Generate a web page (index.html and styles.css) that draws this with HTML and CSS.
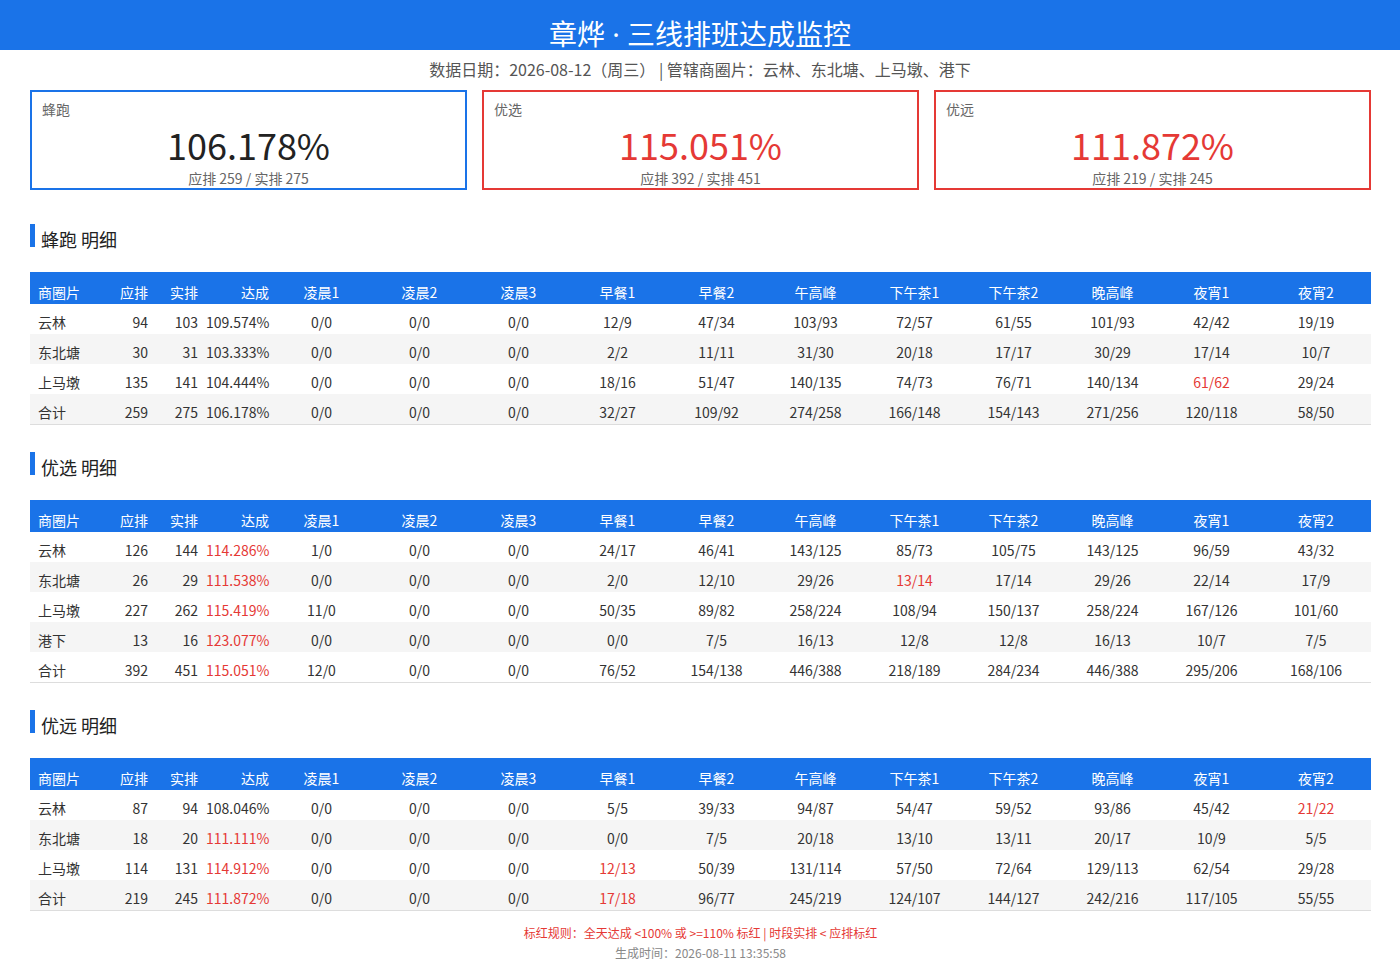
FILE: index.html
```html
<!DOCTYPE html>
<html lang="zh-CN">
<head>
<meta charset="utf-8">
<title>章烨 · 三线排班达成监控</title>
<link rel="stylesheet" href="styles.css">
</head>
<body>
<header class="topbar"><h1 class="title">章烨<span class="dot"> · </span>三线排班达成监控</h1></header>
<div class="subtitle">数据日期：2026-08-12（周三） | 管辖商圈片：云林、东北塘、上马墩、港下</div>
<main class="wrap">
  <section class="cards">
    <div class="card card-ok">
      <div class="card-label">蜂跑</div>
      <div class="card-value">106.178%</div>
      <div class="card-sub">应排 259 / 实排 275</div>
    </div>
    <div class="card card-bad">
      <div class="card-label">优选</div>
      <div class="card-value red">115.051%</div>
      <div class="card-sub">应排 392 / 实排 451</div>
    </div>
    <div class="card card-bad">
      <div class="card-label">优远</div>
      <div class="card-value red">111.872%</div>
      <div class="card-sub">应排 219 / 实排 245</div>
    </div>
  </section>

  <h2 class="sec-title"><span class="bar"></span><span class="sec-text">蜂跑 明细</span></h2>
  <table class="grid">
    <colgroup><col class="c1"><col class="c2"><col class="c3"><col class="c4"><col class="c5"><col class="cn"><col class="cn"><col class="cn"><col class="cn"><col class="cn"><col class="cn"><col class="cn"><col class="cn"><col class="cn"><col class="cl"></colgroup>
    <thead><tr><th class="l">商圈片</th><th class="r">应排</th><th class="r">实排</th><th class="r">达成</th><th>凌晨1</th><th>凌晨2</th><th>凌晨3</th><th>早餐1</th><th>早餐2</th><th>午高峰</th><th>下午茶1</th><th>下午茶2</th><th>晚高峰</th><th>夜宵1</th><th>夜宵2</th></tr></thead>
    <tbody>
      <tr><td class="l">云林</td><td class="r">94</td><td class="r">103</td><td class="r">109.574%</td><td>0/0</td><td>0/0</td><td>0/0</td><td>12/9</td><td>47/34</td><td>103/93</td><td>72/57</td><td>61/55</td><td>101/93</td><td>42/42</td><td>19/19</td></tr>
      <tr><td class="l">东北塘</td><td class="r">30</td><td class="r">31</td><td class="r">103.333%</td><td>0/0</td><td>0/0</td><td>0/0</td><td>2/2</td><td>11/11</td><td>31/30</td><td>20/18</td><td>17/17</td><td>30/29</td><td>17/14</td><td>10/7</td></tr>
      <tr><td class="l">上马墩</td><td class="r">135</td><td class="r">141</td><td class="r">104.444%</td><td>0/0</td><td>0/0</td><td>0/0</td><td>18/16</td><td>51/47</td><td>140/135</td><td>74/73</td><td>76/71</td><td>140/134</td><td class="red">61/62</td><td>29/24</td></tr>
      <tr><td class="l">合计</td><td class="r">259</td><td class="r">275</td><td class="r">106.178%</td><td>0/0</td><td>0/0</td><td>0/0</td><td>32/27</td><td>109/92</td><td>274/258</td><td>166/148</td><td>154/143</td><td>271/256</td><td>120/118</td><td>58/50</td></tr>
    </tbody>
  </table>

  <h2 class="sec-title"><span class="bar"></span><span class="sec-text">优选 明细</span></h2>
  <table class="grid">
    <colgroup><col class="c1"><col class="c2"><col class="c3"><col class="c4"><col class="c5"><col class="cn"><col class="cn"><col class="cn"><col class="cn"><col class="cn"><col class="cn"><col class="cn"><col class="cn"><col class="cn"><col class="cl"></colgroup>
    <thead><tr><th class="l">商圈片</th><th class="r">应排</th><th class="r">实排</th><th class="r">达成</th><th>凌晨1</th><th>凌晨2</th><th>凌晨3</th><th>早餐1</th><th>早餐2</th><th>午高峰</th><th>下午茶1</th><th>下午茶2</th><th>晚高峰</th><th>夜宵1</th><th>夜宵2</th></tr></thead>
    <tbody>
      <tr><td class="l">云林</td><td class="r">126</td><td class="r">144</td><td class="r red">114.286%</td><td>1/0</td><td>0/0</td><td>0/0</td><td>24/17</td><td>46/41</td><td>143/125</td><td>85/73</td><td>105/75</td><td>143/125</td><td>96/59</td><td>43/32</td></tr>
      <tr><td class="l">东北塘</td><td class="r">26</td><td class="r">29</td><td class="r red">111.538%</td><td>0/0</td><td>0/0</td><td>0/0</td><td>2/0</td><td>12/10</td><td>29/26</td><td class="red">13/14</td><td>17/14</td><td>29/26</td><td>22/14</td><td>17/9</td></tr>
      <tr><td class="l">上马墩</td><td class="r">227</td><td class="r">262</td><td class="r red">115.419%</td><td>11/0</td><td>0/0</td><td>0/0</td><td>50/35</td><td>89/82</td><td>258/224</td><td>108/94</td><td>150/137</td><td>258/224</td><td>167/126</td><td>101/60</td></tr>
      <tr><td class="l">港下</td><td class="r">13</td><td class="r">16</td><td class="r red">123.077%</td><td>0/0</td><td>0/0</td><td>0/0</td><td>0/0</td><td>7/5</td><td>16/13</td><td>12/8</td><td>12/8</td><td>16/13</td><td>10/7</td><td>7/5</td></tr>
      <tr><td class="l">合计</td><td class="r">392</td><td class="r">451</td><td class="r red">115.051%</td><td>12/0</td><td>0/0</td><td>0/0</td><td>76/52</td><td>154/138</td><td>446/388</td><td>218/189</td><td>284/234</td><td>446/388</td><td>295/206</td><td>168/106</td></tr>
    </tbody>
  </table>

  <h2 class="sec-title"><span class="bar"></span><span class="sec-text">优远 明细</span></h2>
  <table class="grid">
    <colgroup><col class="c1"><col class="c2"><col class="c3"><col class="c4"><col class="c5"><col class="cn"><col class="cn"><col class="cn"><col class="cn"><col class="cn"><col class="cn"><col class="cn"><col class="cn"><col class="cn"><col class="cl"></colgroup>
    <thead><tr><th class="l">商圈片</th><th class="r">应排</th><th class="r">实排</th><th class="r">达成</th><th>凌晨1</th><th>凌晨2</th><th>凌晨3</th><th>早餐1</th><th>早餐2</th><th>午高峰</th><th>下午茶1</th><th>下午茶2</th><th>晚高峰</th><th>夜宵1</th><th>夜宵2</th></tr></thead>
    <tbody>
      <tr><td class="l">云林</td><td class="r">87</td><td class="r">94</td><td class="r">108.046%</td><td>0/0</td><td>0/0</td><td>0/0</td><td>5/5</td><td>39/33</td><td>94/87</td><td>54/47</td><td>59/52</td><td>93/86</td><td>45/42</td><td class="red">21/22</td></tr>
      <tr><td class="l">东北塘</td><td class="r">18</td><td class="r">20</td><td class="r red">111.111%</td><td>0/0</td><td>0/0</td><td>0/0</td><td>0/0</td><td>7/5</td><td>20/18</td><td>13/10</td><td>13/11</td><td>20/17</td><td>10/9</td><td>5/5</td></tr>
      <tr><td class="l">上马墩</td><td class="r">114</td><td class="r">131</td><td class="r red">114.912%</td><td>0/0</td><td>0/0</td><td>0/0</td><td class="red">12/13</td><td>50/39</td><td>131/114</td><td>57/50</td><td>72/64</td><td>129/113</td><td>62/54</td><td>29/28</td></tr>
      <tr><td class="l">合计</td><td class="r">219</td><td class="r">245</td><td class="r red">111.872%</td><td>0/0</td><td>0/0</td><td>0/0</td><td class="red">17/18</td><td>96/77</td><td>245/219</td><td>124/107</td><td>144/127</td><td>242/216</td><td>117/105</td><td>55/55</td></tr>
    </tbody>
  </table>

  <footer class="foot">
    <div class="rule">标红规则：全天达成 &lt;100% 或 &gt;=110% 标红 | 时段实排 &lt; 应排标红</div>
    <div class="gen">生成时间：2026-08-11 13:35:58</div>
  </footer>
</main>
</body>
</html>
```

FILE: styles.css
```css
* { box-sizing: border-box; }
html, body { margin: 0; padding: 0; background: #fff; }
body {
  font-family: "Noto Sans CJK SC", "Noto Sans", sans-serif;
  color: #333;
}
.topbar {
  height: 50px;
  background: #1a73e8;
}
.title {
  margin: 0;
  padding-top: 16px;
  font-size: 28px;
  line-height: 34px;
  font-weight: 400;
  color: #fff;
  text-align: center;
}
.dot {
  font-family: "Noto Sans", "DejaVu Sans", sans-serif;
}
.subtitle {
  margin-top: 8px;
  font-size: 16px;
  line-height: 22px;
  color: #555;
  text-align: center;
}
.wrap {
  padding: 0 29px 0 30px;
}
.cards {
  margin-top: 10px;
  display: grid;
  grid-template-columns: repeat(3, 1fr);
  gap: 15px;
}
.card {
  height: 100px;
  border: 2px solid #1a73e8;
  padding: 7px 10px 0;
  text-align: center;
}
.card-bad { border-color: #e53935; }
.card-label {
  text-align: left;
  font-size: 14px;
  line-height: 20px;
  color: #666;
}
.card-value {
  margin-top: 7px;
  font-size: 36px;
  line-height: 36px;
  color: #222;
}
.card-sub {
  margin-top: 7px;
  font-size: 14px;
  line-height: 18px;
  color: #666;
}
.red { color: #e53935; }
.card-value.red { color: #e53935; }

.sec-title {
  margin: 27px 0 22px;
  display: flex;
  align-items: flex-start;
  gap: 6px;
  font-size: 18px;
  font-weight: 400;
  color: #222;
}
.cards + .sec-title { margin-top: 34px; }
.bar {
  width: 5px;
  height: 23px;
  background: #1a73e8;
}
.sec-text {
  margin-top: 4px;
  line-height: 22px;
}

.grid {
  width: 100%;
  border-collapse: collapse;
  table-layout: fixed;
  font-size: 14px;
  border-bottom: 1px solid #ddd;
}
col.c1 { width: 80px; }
col.c2 { width: 42px; }
col.c3 { width: 50px; }
col.c4 { width: 71px; }
col.c5 { width: 97px; }
col.cn { width: 99px; }
col.cl { width: 110px; }
.grid th {
  background: #1a73e8;
  color: #fff;
  font-weight: 400;
  padding: 11px 4px 3px;
  line-height: 18px;
  text-align: center;
  white-space: nowrap;
}
.grid td {
  padding: 9px 4px 3px;
  line-height: 18px;
  text-align: center;
  white-space: nowrap;
  color: #333;
}
.grid td.red { color: #e53935; }
.grid tbody tr:nth-child(even) td { background: #f5f5f5; }
.grid .l { text-align: left; padding-left: 8px; }
.grid .r { text-align: right; }

.foot {
  margin-top: 12px;
  text-align: center;
  font-size: 12px;
  line-height: 20px;
}
.rule { color: #e53935; }
.gen { color: #888; }
```
